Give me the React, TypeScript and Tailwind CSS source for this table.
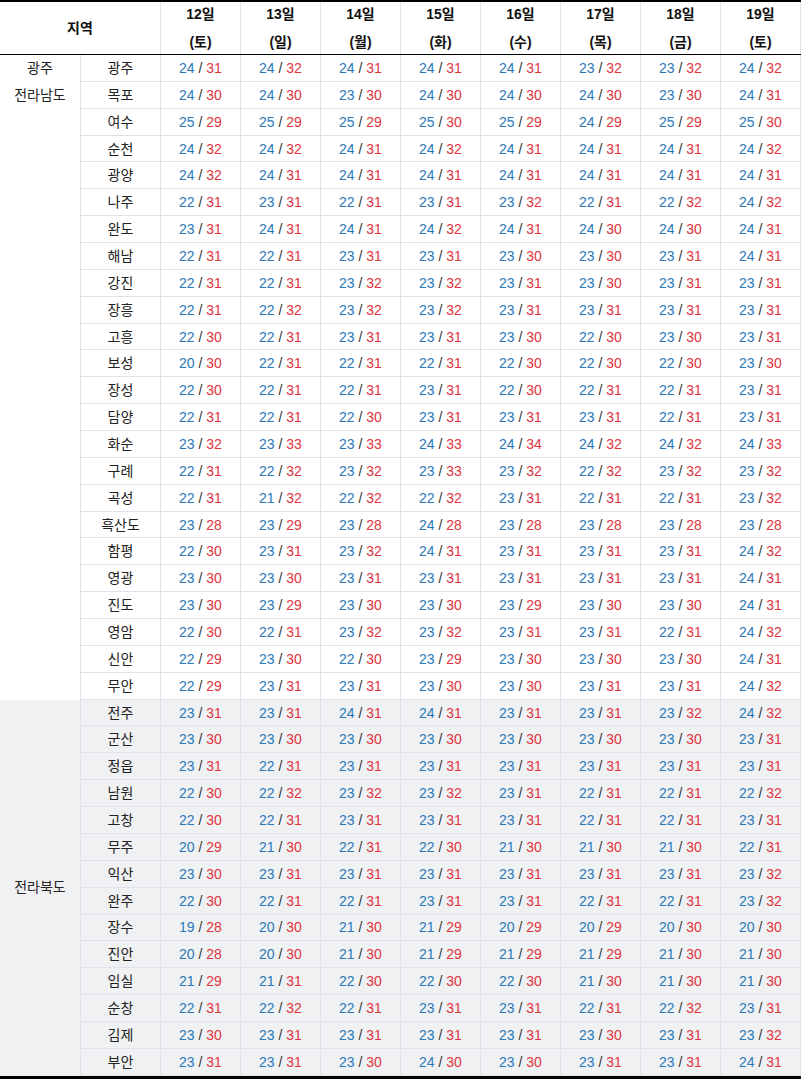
import React from "react";

const days: [string, string][] = [
  ["12일", "(토)"],
  ["13일", "(일)"],
  ["14일", "(월)"],
  ["15일", "(화)"],
  ["16일", "(수)"],
  ["17일", "(목)"],
  ["18일", "(금)"],
  ["19일", "(토)"],
];

const south: [string, string][] = [
  ["광주", "24/31 24/32 24/31 24/31 24/31 23/32 23/32 24/32"],
  ["목포", "24/30 24/30 23/30 24/30 24/30 24/30 23/30 24/31"],
  ["여수", "25/29 25/29 25/29 25/30 25/29 24/29 25/29 25/30"],
  ["순천", "24/32 24/32 24/31 24/32 24/31 24/31 24/31 24/32"],
  ["광양", "24/32 24/31 24/31 24/31 24/31 24/31 24/31 24/31"],
  ["나주", "22/31 23/31 22/31 23/31 23/32 22/31 22/32 24/32"],
  ["완도", "23/31 24/31 24/31 24/32 24/31 24/30 24/30 24/31"],
  ["해남", "22/31 22/31 23/31 23/31 23/30 23/30 23/31 24/31"],
  ["강진", "22/31 22/31 23/32 23/32 23/31 23/30 23/31 23/31"],
  ["장흥", "22/31 22/32 23/32 23/32 23/31 23/31 23/31 23/31"],
  ["고흥", "22/30 22/31 23/31 23/31 23/30 22/30 23/30 23/31"],
  ["보성", "20/30 22/31 22/31 22/31 22/30 22/30 22/30 23/30"],
  ["장성", "22/30 22/31 22/31 23/31 22/30 22/31 22/31 23/31"],
  ["담양", "22/31 22/31 22/30 23/31 23/31 23/31 22/31 23/31"],
  ["화순", "23/32 23/33 23/33 24/33 24/34 24/32 24/32 24/33"],
  ["구례", "22/31 22/32 23/32 23/33 23/32 22/32 23/32 23/32"],
  ["곡성", "22/31 21/32 22/32 22/32 23/31 22/31 22/31 23/32"],
  ["흑산도", "23/28 23/29 23/28 24/28 23/28 23/28 23/28 23/28"],
  ["함평", "22/30 23/31 23/32 24/31 23/31 23/31 23/31 24/32"],
  ["영광", "23/30 23/30 23/31 23/31 23/31 23/31 23/31 24/31"],
  ["진도", "23/30 23/29 23/30 23/30 23/29 23/30 23/30 24/31"],
  ["영암", "22/30 22/31 23/32 23/32 23/31 23/31 22/31 24/32"],
  ["신안", "22/29 23/30 22/30 23/29 23/30 23/30 23/30 24/31"],
  ["무안", "22/29 23/31 23/31 23/30 23/30 23/31 23/31 24/32"],
];

const north: [string, string][] = [
  ["전주", "23/31 23/31 24/31 24/31 23/31 23/31 23/32 24/32"],
  ["군산", "23/30 23/30 23/30 23/30 23/30 23/30 23/30 23/31"],
  ["정읍", "23/31 22/31 23/31 23/31 23/31 23/31 23/31 23/31"],
  ["남원", "22/30 22/32 23/32 23/32 23/31 22/31 22/31 22/32"],
  ["고창", "22/30 22/31 23/31 23/31 23/31 22/31 22/31 23/31"],
  ["무주", "20/29 21/30 22/31 22/30 21/30 21/30 21/30 22/31"],
  ["익산", "23/30 23/31 23/31 23/31 23/31 23/31 23/31 23/32"],
  ["완주", "22/30 22/31 22/31 23/31 23/31 22/31 22/31 23/32"],
  ["장수", "19/28 20/30 21/30 21/29 20/29 20/29 20/30 20/30"],
  ["진안", "20/28 20/30 21/30 21/29 21/29 21/29 21/30 21/30"],
  ["임실", "21/29 21/31 22/30 22/30 22/30 21/30 21/30 21/30"],
  ["순창", "22/31 22/32 22/31 23/31 23/31 22/31 22/32 23/31"],
  ["김제", "23/30 23/31 23/31 23/31 23/31 23/30 23/31 23/32"],
  ["부안", "23/31 23/31 23/30 24/30 23/30 23/31 23/31 24/31"],
];

function DataRow({ name, data }: { name: string; data: string }) {
  const cells = data.split(" ").map((c) => c.split("/"));
  return (
    <div className="flex h-[26.87px] border-b border-[#dfe3e9]">
      <div className="w-[80px] border-l border-[#dfe3e9] flex items-center justify-center text-[#222] leading-[20px]">
        {name}
      </div>
      {cells.map(([lo, hi], i) => (
        <div
          key={i}
          className={
            i === cells.length - 1
              ? "w-[81px] border-l border-r border-[#dfe3e9] flex items-center justify-center leading-[20px]"
              : "w-[80px] border-l border-[#dfe3e9] flex items-center justify-center leading-[20px]"
          }
        >
          <span className="text-[#2a78b8]">{lo}</span>
          <span className="text-[#333] whitespace-pre"> / </span>
          <span className="text-[#e0343e]">{hi}</span>
        </div>
      ))}
    </div>
  );
}

export default function App() {
  return (
    <div className="w-[802px] h-[1080px] bg-white text-[14px] font-['Liberation_Sans','Noto_Sans_CJK_KR',sans-serif]">
      <div className="w-[801px] border-t-2 border-b-[3px] border-black">
        <div className="flex h-[53px] border-b border-black">
          <div className="w-[160px] flex items-center justify-center font-bold text-[#111]">
            지역
          </div>
          {days.map(([d, w], i) => (
            <div
              key={d}
              className={
                i === days.length - 1
                  ? "w-[81px] border-l border-r border-[#dfe3e9] flex flex-col items-center font-bold text-[#111]"
                  : "w-[80px] border-l border-[#dfe3e9] flex flex-col items-center font-bold text-[#111]"
              }
            >
              <span className="leading-[24px]">{d}</span>
              <span className="leading-[24px] mt-[4px]">{w}</span>
            </div>
          ))}
        </div>

        <div className="flex bg-white">
          <div className="w-[80px] flex flex-col items-center leading-[27px] text-[#222]">
            <span>광주</span>
            <span>전라남도</span>
          </div>
          <div className="flex flex-col">
            {south.map(([n, d]) => (
              <DataRow key={n} name={n} data={d} />
            ))}
          </div>
        </div>

        <div className="flex bg-[#f0f1f3]">
          <div className="w-[80px] flex items-center justify-center text-[#222]">
            전라북도
          </div>
          <div className="flex flex-col">
            {north.map(([n, d]) => (
              <DataRow key={n} name={n} data={d} />
            ))}
          </div>
        </div>
      </div>
    </div>
  );
}
